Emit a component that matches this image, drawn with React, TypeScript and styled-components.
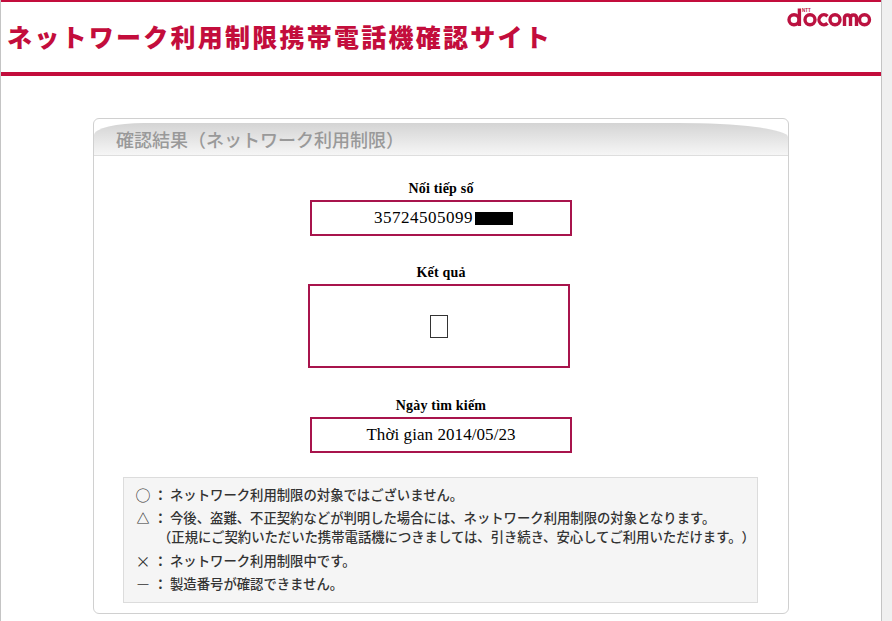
import React from 'react'
import styled, { createGlobalStyle } from 'styled-components'

const GlobalStyle = createGlobalStyle`
    html, body {
        margin:0;
        padding:0;
        background:#f0f0f0;
    }
`

const Page = styled.div`
    width:880px;
    height:621px;
    overflow:hidden;
    background:white;
    border-left:1px solid #c4c4c4;
    border-right:1px solid #c4c4c4;
    font-family:"Noto Sans CJK JP", sans-serif;
`

const Header = styled.header`
    height:70px;
    border-top:2px solid #c30d3c;
    border-bottom:4px solid #c30d3c;
    display:flex;
    justify-content:space-between;
    align-items:flex-start;
`

const Title = styled.h1`
    margin:18px 0 0 6px;
    font-size:25px;
    line-height:32px;
    letter-spacing:2.25px;
    font-weight:900;
    color:#c30d3c;
    white-space:nowrap;
`

const Logo = styled.svg`
    width:86px;
    height:24px;
    margin:5px 9px 0 0;
`

const Panel = styled.section`
    width:696px;
    height:496px;
    margin:42px 0 0 92px;
    border:1px solid #d0d0d0;
    border-radius:6px;
    padding-top:4px;
    box-sizing:border-box;
`

const PanelHead = styled.div`
    height:32px;
    padding-left:22px;
    border-bottom:1px solid #dedede;
    border-radius:50px 110px 0 0 / 12px 14px 0 0;
    background:linear-gradient(#d4d4d4, #f6f6f6);
    font-size:18px;
    line-height:32px;
    color:#999;
    font-weight:500;
`

const Field = styled.div<{ $top: number }>`
    margin-top:${props => props.$top}px;
    width:262px;
    margin-left:216px;
`

const Label = styled.div`
    font-family:"Liberation Serif", serif;
    font-weight:bold;
    font-size:14px;
    line-height:16px;
    letter-spacing:0.2px;
    text-align:center;
    color:black;
    padding-top:1px;
    margin-bottom:3px;
`

const Box = styled.div<{ $height: number; $shift?: number; $digits?: boolean }>`
    width:262px;
    height:${props => props.$height}px;
    margin-left:${props => props.$shift || 0}px;
    padding-left:${props => props.$digits ? 5 : 0}px;
    box-sizing:border-box;
    border:2px solid #a8144c;
    display:flex;
    align-items:center;
    justify-content:center;
    font-family:"Liberation Serif", serif;
    font-size:17px;
    letter-spacing:${props => props.$digits ? 0.5 : 0.07}px;
    color:black;
`

const Redacted = styled.span`
    display:inline-block;
    width:38px;
    height:13px;
    margin-left:2px;
    background:black;
`

const Tofu = styled.span`
    display:block;
    width:18px;
    height:23px;
    box-sizing:border-box;
    border:1px solid #333;
`

const Legend = styled.div`
    margin:24px 0 0 29px;
    width:635px;
    height:126px;
    box-sizing:border-box;
    border:1px solid #dcdcdc;
    background:#f5f5f5;
    padding:7px 0 0 11px;
    font-size:13.35px;
    font-weight:500;
    line-height:20px;
    text-spacing-trim:space-all;
    color:#333;
`

const LegendRow = styled.div`
    display:grid;
    grid-template-columns:16px 19px 1fr;
    margin-bottom:3.25px;
    white-space:nowrap;
`

const Mark = styled.span<{ $size?: number; $weight?: number }>`
    font-size:${props => props.$size || 15}px;
    font-weight:${props => props.$weight || 400};
    text-align:center;
`

const Colon = styled.span`
    text-align:center;
    font-weight:700;
`

const Note = styled.div`
    margin-left:-12px;
    margin-top:-1px;
`

const App: React.FC = () => {
    return <Page>
        <GlobalStyle />
        <Header>
            <Title>ネットワーク利用制限携帯電話機確認サイト</Title>
            <Logo viewBox="0 0 86 24" fill="none" stroke="#bb1240" strokeWidth="3.4">
                <circle cx="8" cy="12.750" r="5" />
                <path d="M13.400 1.500V19" />
                <circle cx="24" cy="12.750" r="5" />
                <path d="M41.500 9.200A5 5 0 1 0 41.500 16.300" />
                <circle cx="49" cy="12.750" r="5" />
                <path d="M58.500 19V9.500M58.500 10.500Q59 8 61.500 8T64.500 11V19M64.500 11Q64.500 8 67.500 8T70.500 11V19" />
                <circle cx="78.500" cy="12.750" r="5" />
                <text x="16" y="5" fontFamily="Liberation Sans, sans-serif" fontWeight="bold" fontSize="4.500" stroke="none" fill="#bb1240">NTT</text>
            </Logo>
        </Header>
        <Panel>
            <PanelHead>確認結果（ネットワーク利用制限）</PanelHead>
            <Field $top={24}>
                <Label>Nối tiếp số</Label>
                <Box $height={36} $digits>35724505099<Redacted /></Box>
            </Field>
            <Field $top={28}>
                <Label>Kết quả</Label>
                <Box $height={84} $shift={-2}><Tofu /></Box>
            </Field>
            <Field $top={29}>
                <Label>Ngày tìm kiếm</Label>
                <Box $height={36}>Thời gian 2014/05/23</Box>
            </Field>
            <Legend>
                <LegendRow><Mark>○</Mark><Colon>：</Colon><span>ネットワーク利用制限の対象ではございません。</span></LegendRow>
                <LegendRow>
                    <Mark $size={13} $weight={700}>△</Mark><Colon>：</Colon>
                    <div>
                        今後、盗難、不正契約などが判明した場合には、ネットワーク利用制限の対象となります。
                        <Note>（正規にご契約いただいた携帯電話機につきましては、引き続き、安心してご利用いただけます。）</Note>
                    </div>
                </LegendRow>
                <LegendRow><Mark>×</Mark><Colon>：</Colon><span>ネットワーク利用制限中です。</span></LegendRow>
                <LegendRow><Mark $size={14} $weight={300}>ー</Mark><Colon>：</Colon><span>製造番号が確認できません。</span></LegendRow>
            </Legend>
        </Panel>
    </Page>
}

export default App
